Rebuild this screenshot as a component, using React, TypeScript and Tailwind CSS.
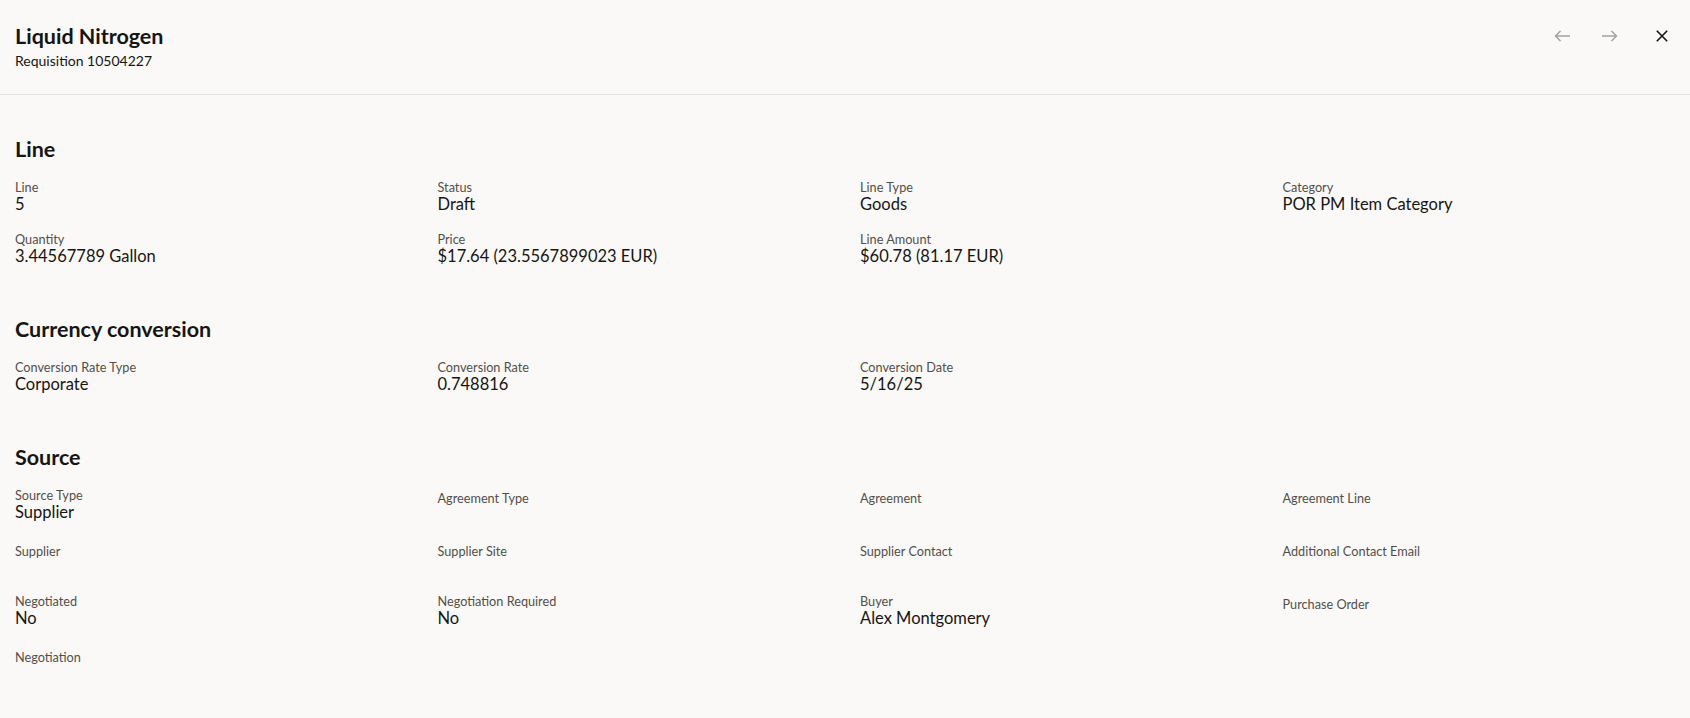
import { ReactNode } from "react";

type Field = { label: string; value?: string };

const lineFields: Field[] = [
  { label: "Line", value: "5" },
  { label: "Status", value: "Draft" },
  { label: "Line Type", value: "Goods" },
  { label: "Category", value: "POR PM Item Category" },
  { label: "Quantity", value: "3.44567789 Gallon" },
  { label: "Price", value: "$17.64 (23.5567899023 EUR)" },
  { label: "Line Amount", value: "$60.78 (81.17 EUR)" },
];

const currencyFields: Field[] = [
  { label: "Conversion Rate Type", value: "Corporate" },
  { label: "Conversion Rate", value: "0.748816" },
  { label: "Conversion Date", value: "5/16/25" },
];

const sourceFields: Field[] = [
  { label: "Source Type", value: "Supplier" },
  { label: "Agreement Type" },
  { label: "Agreement" },
  { label: "Agreement Line" },
  { label: "Supplier" },
  { label: "Supplier Site" },
  { label: "Supplier Contact" },
  { label: "Additional Contact Email" },
  { label: "Negotiated", value: "No" },
  { label: "Negotiation Required", value: "No" },
  { label: "Buyer", value: "Alex Montgomery" },
  { label: "Purchase Order" },
  { label: "Negotiation" },
];

function ArrowIcon({ dir }: { dir: "left" | "right" }) {
  return (
    <svg width="16" height="12" viewBox="0 0 16 12" fill="none" stroke="#a3a2a0" strokeWidth="1.5" strokeLinecap="butt">
      {dir === "left" ? (
        <path d="M1.5 6H16M6.5 1L1.5 6L6.5 11" />
      ) : (
        <path d="M0 6H14.5M9.5 1L14.5 6L9.5 11" />
      )}
    </svg>
  );
}

function CloseIcon() {
  return (
    <svg width="12" height="12" viewBox="0 0 12 12" fill="none" stroke="#161513" strokeWidth="1.6">
      <path d="M0.8 0.8L11.2 11.2M11.2 0.8L0.8 11.2" />
    </svg>
  );
}

function FieldCell({ field }: { field: Field }) {
  if (!field.value) {
    return (
      <div className="h-[53px] pt-[3px]">
        <div className="text-[12.7px] leading-[16px] text-[#524f4b]">{field.label}</div>
      </div>
    );
  }
  return (
    <div className="h-[52px]">
      <div className="text-[12.7px] leading-[16px] text-[#524f4b]">{field.label}</div>
      <div className="text-[16.5px] leading-[18px] text-[#161513]">{field.value}</div>
    </div>
  );
}

function Section({ title, fields, last }: { title: string; fields: Field[]; last?: boolean }): ReactNode {
  return (
    <section className={last ? "" : "mb-[34px]"}>
      <h2 className="text-[21.5px] font-bold leading-[24px] text-[#161513]">{title}</h2>
      <div className="mt-[18px] grid grid-cols-4 gap-x-[30px]">
        {fields.map((f) => (
          <FieldCell key={f.label} field={f} />
        ))}
      </div>
    </section>
  );
}

export default function App() {
  return (
    <div className="min-h-[718px] w-full bg-[#faf9f8]" style={{ fontFamily: "Lato, 'Noto Sans', sans-serif" }}>
      <header className="flex items-start justify-between border-b border-[#e6e4e2] pb-[23px] pl-[15px] pr-[12px] pt-[24px]">
        <div>
          <h1 className="text-[21.5px] font-bold leading-[24px] text-[#161513]">Liquid Nitrogen</h1>
          <div className="mt-[3px] text-[14px] leading-[20px] text-[#161513]">Requisition 10504227</div>
        </div>
        <div className="mt-[-4px] flex items-center">
          <button type="button" aria-label="Previous" className="flex h-[32px] w-[32px] items-center justify-center">
            <ArrowIcon dir="left" />
          </button>
          <button type="button" aria-label="Next" className="ml-[16px] flex h-[32px] w-[32px] items-center justify-center">
            <ArrowIcon dir="right" />
          </button>
          <button type="button" aria-label="Close" className="ml-[20px] flex h-[32px] w-[32px] items-center justify-center">
            <CloseIcon />
          </button>
        </div>
      </header>

      <main className="px-[15px] pt-[42px]">
        <Section title="Line" fields={lineFields} />
        <Section title="Currency conversion" fields={currencyFields} />
        <Section title="Source" fields={sourceFields} last />
      </main>
    </div>
  );
}
